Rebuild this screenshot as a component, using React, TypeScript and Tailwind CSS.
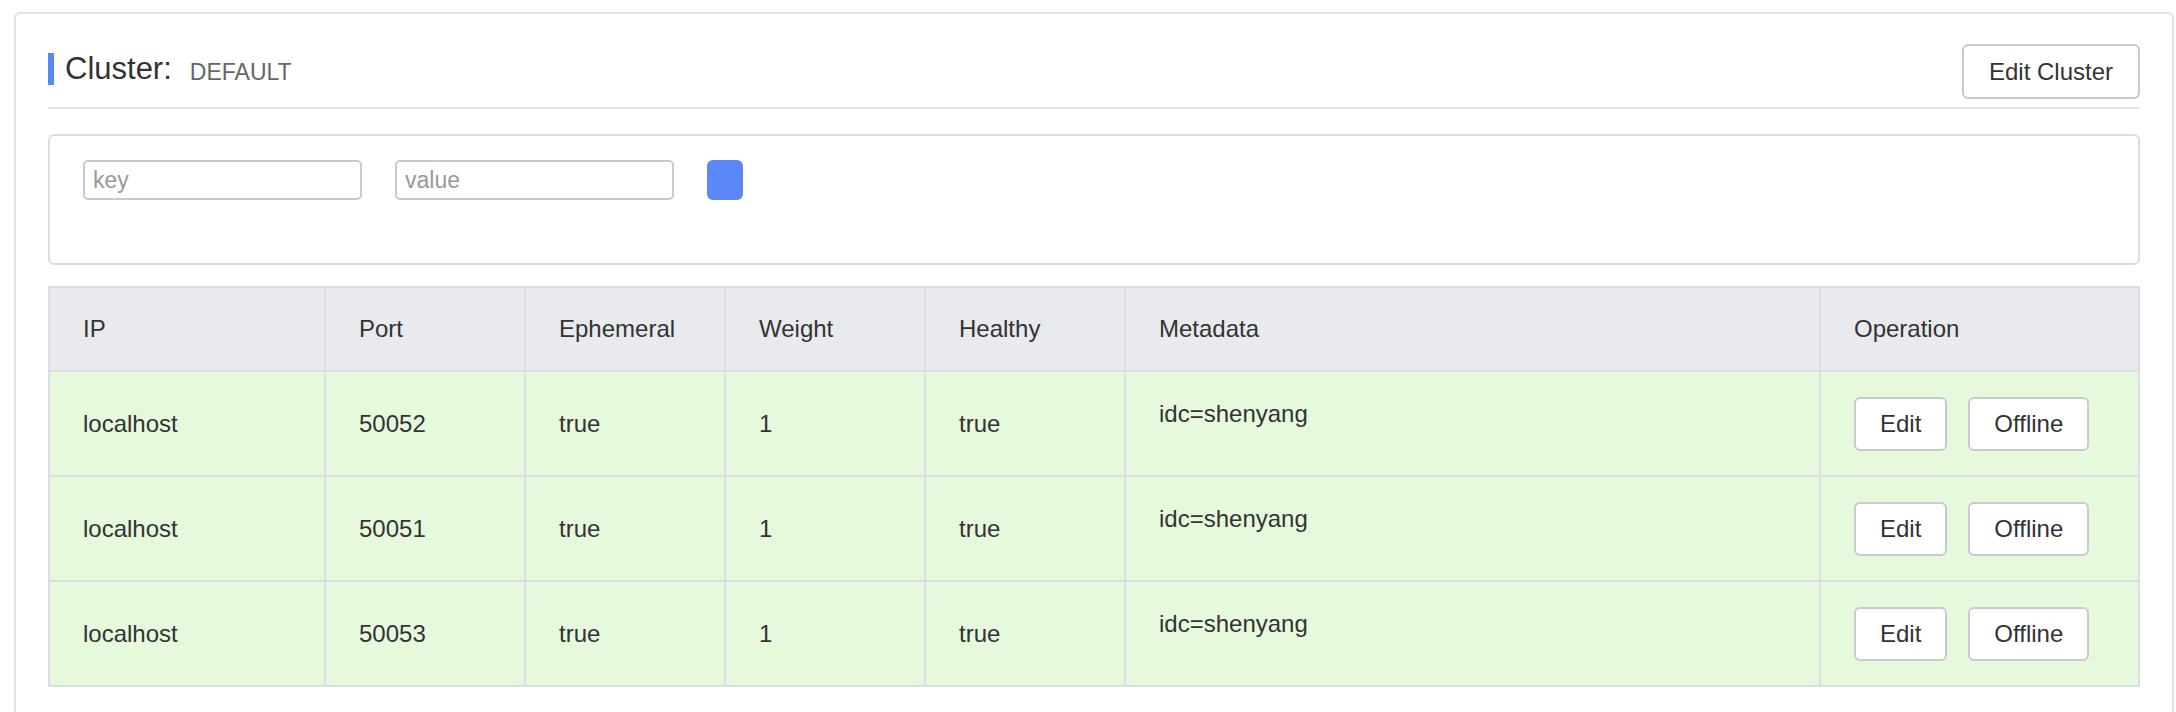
const rows = [
  { ip: "localhost", port: "50052", ephemeral: "true", weight: "1", healthy: "true", metadata: "idc=shenyang" },
  { ip: "localhost", port: "50051", ephemeral: "true", weight: "1", healthy: "true", metadata: "idc=shenyang" },
  { ip: "localhost", port: "50053", ephemeral: "true", weight: "1", healthy: "true", metadata: "idc=shenyang" },
];

const headers = ["IP", "Port", "Ephemeral", "Weight", "Healthy", "Metadata", "Operation"];

export default function App() {
  return (
    <div className="w-[2176px] h-[712px] overflow-hidden bg-white pl-[14px] pr-[2px] pt-[12px] font-['Liberation_Sans',Arial,sans-serif] text-[#333]">
      <div className="border-2 border-[#e0e0e6] rounded-[6px] px-[32px] pt-[30px] pb-[40px]">
        {/* header */}
        <div className="flex justify-between items-start">
          <div className="flex items-end h-[32px] mt-[9px]">
            <div className="w-[6px] h-[32px] bg-[#5b87f5]" />
            <span className="ml-[11px] text-[31px] leading-[32px] text-[#333]">Cluster:</span>
            <span className="ml-[18px] text-[23px] leading-[26px] text-[#666]">DEFAULT</span>
          </div>
          <button className="h-[55px] px-[25px] border-2 border-[#c8cad0] rounded-[6px] bg-white text-[24px] text-[#333]">
            Edit Cluster
          </button>
        </div>
        <div className="mt-[8px] h-[2px] bg-[#e4e4ea]" />

        {/* filter box */}
        <div className="mt-[25px] h-[131px] border-2 border-[#dcdde2] rounded-[6px] pt-[24px] px-[33px]">
          <div className="flex items-start gap-[33px]">
            <input
              placeholder="key"
              className="w-[279px] h-[40px] border-2 border-[#c8cad0] rounded-[5px] px-[8px] text-[23px] text-[#333] placeholder:text-[#999] outline-none"
            />
            <input
              placeholder="value"
              className="w-[279px] h-[40px] border-2 border-[#c8cad0] rounded-[5px] px-[8px] text-[23px] text-[#333] placeholder:text-[#999] outline-none"
            />
            <button className="w-[36px] h-[40px] rounded-[6px] bg-[#5b87f8]" />
          </div>
        </div>

        {/* table */}
        <table className="mt-[21px] w-[2090px] table-fixed border-collapse text-[24px] text-[#333]">
          <colgroup>
            <col className="w-[276px]" />
            <col className="w-[200px]" />
            <col className="w-[200px]" />
            <col className="w-[200px]" />
            <col className="w-[200px]" />
            <col className="w-[695px]" />
            <col className="w-[319px]" />
          </colgroup>
          <thead>
            <tr className="bg-[#e9eaee] h-[84px]">
              {headers.map((h) => (
                <th key={h} className="border-2 border-[#dcdde2] pl-[33px] text-left font-normal">
                  {h}
                </th>
              ))}
            </tr>
          </thead>
          <tbody>
            {rows.map((r) => (
              <tr key={r.port} className="bg-[#e6f9dd] h-[105px]">
                <td className="border-2 border-[#dcdde2] pl-[33px]">{r.ip}</td>
                <td className="border-2 border-[#dcdde2] pl-[33px]">{r.port}</td>
                <td className="border-2 border-[#dcdde2] pl-[33px]">{r.ephemeral}</td>
                <td className="border-2 border-[#dcdde2] pl-[33px]">{r.weight}</td>
                <td className="border-2 border-[#dcdde2] pl-[33px]">{r.healthy}</td>
                <td className="border-2 border-[#dcdde2] pl-[33px] pb-[20px]">{r.metadata}</td>
                <td className="border-2 border-[#dcdde2] pl-[33px]">
                  <div className="flex gap-[21px]">
                    <button className="h-[54px] px-[24px] border-2 border-[#c8cad0] rounded-[6px] bg-white text-[24px] text-[#333]">
                      Edit
                    </button>
                    <button className="h-[54px] px-[24px] border-2 border-[#c8cad0] rounded-[6px] bg-white text-[24px] text-[#333]">
                      Offline
                    </button>
                  </div>
                </td>
              </tr>
            ))}
          </tbody>
        </table>
      </div>
    </div>
  );
}
